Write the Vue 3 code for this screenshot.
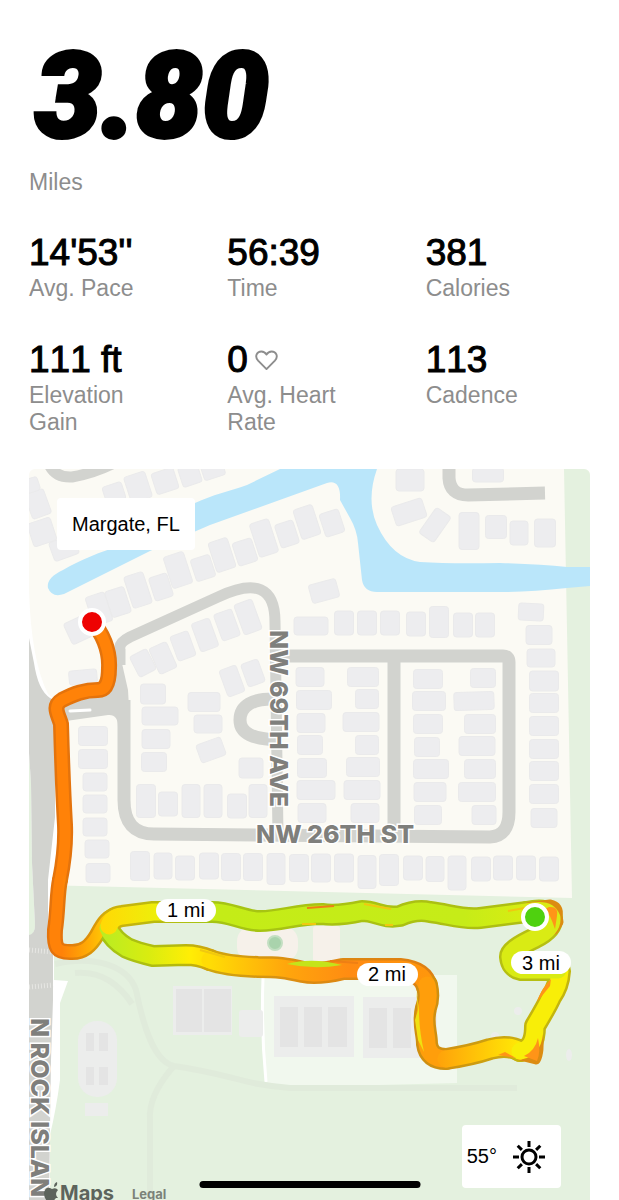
<script setup>
const stats = [
  { value: "14'53''", label: 'Avg. Pace' },
  { value: '56:39', label: 'Time' },
  { value: '381', label: 'Calories' },
  { value: '111 ft', label: 'Elevation Gain' },
  { value: '0', label: 'Avg. Heart Rate', heart: true },
  { value: '113', label: 'Cadence' },
]

// Building footprints: centre x, centre y, width, height, rotation in degrees
const buildings = [
  [165, 481, 23, 22, -18], [190, 475, 20, 20, -18], [213, 470, 22, 16, -18], [138, 487, 22, 27, -18],
  [114, 493, 20, 18, -18], [38, 504, 20, 26, -20], [32, 485, 14, 14, -18], [42, 532, 24, 24, -18],
  [64, 548, 26, 20, -20], [178, 570, 21, 33, -18], [203, 568, 20, 23, -18], [222, 555, 20, 31, -18],
  [245, 552, 20, 24, -18], [264, 538, 20, 35, -18], [287, 534, 19, 24, -18], [307, 522, 20, 31, -18],
  [332, 523, 20, 24, -18], [161, 587, 19, 24, -18], [138, 590, 20, 33, -18], [118, 602, 20, 27, -18],
  [99, 609, 20, 30, -18], [78, 630, 22, 23, -25], [205, 635, 19, 30, -20], [183, 646, 19, 26, -20],
  [163, 658, 19, 28, -24], [143, 663, 19, 23, -27], [227, 625, 19, 28, -20], [248, 617, 19, 32, -20],
  [324, 591, 28, 19, -15], [311, 626, 34, 18, 0], [344, 623, 19, 24, 0], [367, 623, 19, 24, 0],
  [390, 623, 19, 24, 0], [416, 624, 19, 24, 0], [439, 622, 19, 31, 0], [463, 625, 19, 24, 0],
  [485, 625, 19, 24, 0], [531, 612, 25, 17, 3], [539, 635, 26, 19, 0], [410, 480, 28, 22, 0],
  [488, 475, 31, 14, 0], [409, 512, 32, 20, -18], [435, 525, 18, 31, 35], [469, 531, 20, 37, 0],
  [496, 527, 21, 23, 0], [519, 533, 18, 24, 0], [545, 533, 21, 28, 0], [83, 677, 28, 14, -5],
  [93, 736, 29, 19, 0], [93, 759, 29, 19, 0], [95, 782, 24, 18, 0], [95, 804, 24, 18, 0],
  [95, 827, 24, 18, 0], [97, 849, 24, 18, 0], [98, 873, 24, 19, 0], [153, 694, 25, 20, 0],
  [160, 716, 36, 18, 0], [156, 739, 28, 19, 0], [154, 762, 25, 19, 0], [204, 702, 32, 19, 0],
  [208, 724, 28, 18, 0], [211, 750, 26, 19, -20], [146, 801, 19, 33, 0], [168, 804, 19, 24, 0],
  [191, 801, 18, 33, 0], [213, 801, 18, 33, 0], [237, 806, 19, 24, 0], [258, 801, 18, 33, 0],
  [251, 768, 24, 20, 0], [232, 681, 18, 28, -20], [253, 673, 18, 24, -20],
  [310, 677, 28, 19, 0], [314, 700, 35, 19, 0], [311, 723, 28, 19, 0], [310, 745, 25, 19, 0],
  [312, 768, 29, 19, 0], [316, 790, 38, 19, 0], [312, 813, 28, 19, 0],
  [363, 677, 31, 19, 0], [367, 699, 23, 19, 0], [361, 722, 36, 19, 0], [367, 745, 23, 19, 0],
  [363, 767, 33, 19, 0], [362, 790, 36, 19, 0], [365, 813, 28, 19, 0],
  [428, 679, 29, 19, 0], [429, 701, 33, 19, 0], [428, 724, 29, 19, 0], [427, 747, 25, 19, 0],
  [431, 769, 35, 19, 0], [430, 792, 32, 19, 0], [428, 815, 27, 19, 0],
  [483, 678, 25, 19, 0], [474, 701, 40, 18, -2], [480, 724, 31, 19, 0], [477, 746, 36, 19, 0],
  [480, 769, 31, 19, 0], [477, 792, 37, 19, 0], [484, 815, 24, 19, 0],
  [541, 658, 28, 18, 0], [544, 681, 29, 20, 0], [544, 703, 29, 19, 0], [544, 726, 29, 19, 0],
  [544, 749, 29, 19, 0], [544, 771, 29, 19, 0], [544, 794, 29, 19, 0], [544, 818, 26, 19, 0],
  [140, 866, 19, 29, 0], [163, 866, 18, 26, 0], [185, 868, 19, 24, 0], [209, 866, 19, 26, 0],
  [231, 867, 19, 27, 0], [253, 867, 19, 27, 0], [276, 869, 18, 31, 0], [299, 868, 19, 27, 0],
  [321, 868, 19, 28, 0], [344, 868, 19, 28, 0], [367, 872, 18, 33, 0], [389, 870, 19, 31, 0],
  [413, 868, 19, 24, 0], [435, 869, 18, 25, 0], [457, 873, 18, 34, 0], [481, 869, 19, 24, 0],
  [503, 868, 19, 24, 0], [526, 868, 19, 24, 0], [549, 869, 19, 24, 0],
]

const courts = [
  [176, 989, 26, 43], [204, 989, 27, 43],
  [280, 1007, 18, 40], [304, 1007, 18, 40], [328, 1007, 19, 40],
  [369, 1008, 18, 40], [393, 1008, 18, 40],
  [86, 1033, 8, 18], [99, 1033, 9, 18], [86, 1067, 8, 18], [99, 1067, 9, 18],
]

// Route sections in drawing order, each coloured by pace
const route = [
  { id: 'west', wide: false, d: 'M92 622C102 632 110 650 109 668Q109 690 98 690C84 690 74 694 62 700C52 706 58 714 61 724C62 760 63 790 65 825Q66 850 60 880' },
  { id: 'turn', wide: false, d: 'M60 880C57 894 58 910 55 930C54 948 57 952 70 952C84 953 91 945 97 935C103 924 107 916 120 914' },
  { id: 'back', wide: true, d: 'M210 960Q198 955 186 955L153 956Q136 952 127 948Q113 940 108 928' },
  { id: 'north', wide: true, d: 'M109 926Q112 917 122 916L153 912L210 912C230 911 242 921 260 921C282 921 296 914 322 914C336 916 348 914 362 911C376 911 383 919 400 916Q416 909 430 912C448 914 462 920 480 918L527 912' },
  { id: 'south', wide: true, d: 'M427 987Q423 971 400 969L343 969Q318 975 303 972C286 968 278 967 258 967Q226 966 210 960' },
  { id: 'dip', wide: true, d: 'M427 985Q430 998 426 1008C422 1024 427 1032 427 1044Q429 1059 446 1059' },
  { id: 'bottom', wide: true, d: 'M446 1059Q472 1055 490 1049Q508 1044 520 1051' },
  { id: 'rise', wide: true, d: 'M520 1051Q535 1050 535 1026Q547 1006 551 997Q559 986 560 971' },
  { id: 'hook', wide: true, d: 'M527 912Q548 907 552 918Q553 929 535 938Q509 950 510 957Q511 968 521 970L558 970' },
]
</script>

<template>
  <main class="screen">
    <section class="summary">
      <h1 class="distance">3.80</h1>
      <p class="label">Miles</p>
      <dl class="stats">
        <div v-for="s in stats" :key="s.label" class="stat">
          <dt class="label">{{ s.label }}</dt>
          <dd class="value">
            {{ s.value }}
            <svg v-if="s.heart" class="heart" viewBox="0 0 24 22" aria-hidden="true">
              <path d="M12 20 3.2 11.2C-.8 6.8 2 1.5 6.6 1.5 9.2 1.5 11 3 12 4.8 13 3 14.8 1.5 17.4 1.5 22 1.5 24.8 6.8 20.8 11.2Z" />
            </svg>
          </dd>
        </div>
      </dl>
    </section>

    <section class="map" aria-label="Route map">
      <svg class="canvas" viewBox="29 469 561 731">
        <defs>
          <linearGradient id="fill-turn" gradientUnits="userSpaceOnUse" x1="62" y1="890" x2="116" y2="890">
            <stop offset="0" stop-color="#ff8208" /><stop offset=".5" stop-color="#ffac05" /><stop offset="1" stop-color="#ffdf05" />
          </linearGradient>
          <linearGradient id="edge-turn" gradientUnits="userSpaceOnUse" x1="62" y1="890" x2="120" y2="890">
            <stop offset="0" stop-color="#e4730c" /><stop offset=".5" stop-color="#dc9208" /><stop offset="1" stop-color="#c8bd0c" />
          </linearGradient>
          <linearGradient id="fill-north" gradientUnits="userSpaceOnUse" x1="105" y1="0" x2="527" y2="0">
            <stop offset="0" stop-color="#ffda05" /><stop offset=".12" stop-color="#eeee0b" /><stop offset=".27" stop-color="#c4ec17" /><stop offset=".85" stop-color="#c6ec18" /><stop offset="1" stop-color="#d8ed12" />
          </linearGradient>
          <linearGradient id="edge-north" gradientUnits="userSpaceOnUse" x1="105" y1="0" x2="527" y2="0">
            <stop offset="0" stop-color="#cfae0b" /><stop offset=".1" stop-color="#bdb90e" /><stop offset=".25" stop-color="#a5c512" /><stop offset="1" stop-color="#aebe12" />
          </linearGradient>
          <linearGradient id="fill-back" gradientUnits="userSpaceOnUse" x1="108" y1="0" x2="210" y2="0">
            <stop offset="0" stop-color="#bdec20" /><stop offset=".4" stop-color="#d9ec10" /><stop offset=".8" stop-color="#ffee05" /><stop offset="1" stop-color="#ffdc05" />
          </linearGradient>
          <linearGradient id="edge-back" gradientUnits="userSpaceOnUse" x1="108" y1="0" x2="210" y2="0">
            <stop offset="0" stop-color="#a5c413" /><stop offset=".7" stop-color="#b5b90e" /><stop offset="1" stop-color="#cfa50d" />
          </linearGradient>
          <linearGradient id="fill-south" gradientUnits="userSpaceOnUse" x1="210" y1="0" x2="427" y2="0">
            <stop offset="0" stop-color="#ffdc05" /><stop offset=".35" stop-color="#ffa60c" /><stop offset=".65" stop-color="#ff8b12" /><stop offset="1" stop-color="#ff960c" />
          </linearGradient>
          <linearGradient id="edge-south" gradientUnits="userSpaceOnUse" x1="210" y1="0" x2="427" y2="0">
            <stop offset="0" stop-color="#cfa50d" /><stop offset=".4" stop-color="#dc8c12" /><stop offset="1" stop-color="#df7f12" />
          </linearGradient>
          <linearGradient id="fill-bottom" gradientUnits="userSpaceOnUse" x1="440" y1="0" x2="520" y2="0">
            <stop offset="0" stop-color="#ffa40a" /><stop offset="1" stop-color="#ffe905" />
          </linearGradient>
          <linearGradient id="edge-bottom" gradientUnits="userSpaceOnUse" x1="440" y1="0" x2="520" y2="0">
            <stop offset="0" stop-color="#d08f10" /><stop offset="1" stop-color="#c9ac10" />
          </linearGradient>
        </defs>

        <rect class="land" x="29" y="469" width="561" height="731" />
        <path class="park" d="M564 469H590V1200H29V750L40 885L572 898Z" />
        <path class="water" d="M48 588Q46 578 63 570C82 559 100 552 120 546L195 503C212 495 230 491 247 485L280 469H377Q366 500 377 525Q392 558 420 562Q450 564 500 563Q540 564 567 567H590V586L567 588Q530 592 500 592H377Q364 592 362 580L358 543Q357 530 350 518L340 500Q341 479 327 483L210 525L150 551L64 594Q52 598 48 588Z" />

        <!-- park grounds -->
        <path class="lawn" d="M263 975L372 975H457V1083L300 1087L266 1083Q262 1040 263 975Z" />
        <path class="lawn-edge" d="M263 978Q261 1030 266 1082" />
        <path class="trail" d="M55 964C95 955 128 966 136 990C144 1030 155 1062 174 1066C230 1074 245 1085 290 1088L517 1088" />
        <path class="trail" d="M173 1067Q148 1096 150 1120V1200" />
        <path class="trail" d="M75 973Q110 970 132 1004" />
        <rect class="sand" x="237" y="926" width="61" height="36" rx="15" />
        <rect class="sand" x="313" y="926" width="27" height="36" rx="3" />
        <circle class="tree" cx="275" cy="943" r="7" />
        <rect class="plot" x="173" y="986" width="59" height="49" />
        <rect class="plot" x="239" y="1010" width="24" height="27" rx="3" />
        <rect class="plot" x="274" y="996" width="80" height="61" />
        <rect class="plot" x="363" y="997" width="74" height="61" />
        <rect class="plot" x="78" y="1021" width="39" height="76" rx="19" />
        <rect class="plot" x="85" y="1103" width="23" height="13" />
        <circle class="plot" cx="495" cy="1036" r="4" />
        <circle class="plot" cx="518" cy="1011" r="4" />
        <ellipse class="plot" cx="569" cy="1055" rx="3" ry="6" />
        <rect v-for="(c, i) in courts" :key="i" class="court" :x="c[0]" :y="c[1]" :width="c[2]" :height="c[3]" />

        <g class="buildings">
          <rect
            v-for="(b, i) in buildings"
            :key="i"
            :x="b[0] - b[2] / 2"
            :y="b[1] - b[3] / 2"
            :width="b[2]"
            :height="b[3]"
            rx="3"
            :transform="`rotate(${b[4]} ${b[0]} ${b[1]})`"
          />
        </g>

        <!-- roads -->
        <path class="verge" d="M29 590Q31 660 48 694L60 704V722L64 728L56 890V940H54V980L68 981L60 1003V1080Q56 1110 50 1135V1200H29Z" />
        <path class="park" d="M29 753L31 783L32 863L35 925Q35 935 29 935Z" />
        <path class="road-fill" d="M29 638L34 663Q38 690 50 698L60 703L104 690L119 650L128 690L130 725L118 727Q118 714 108 715L66 721L55 730L55 817L48 880V923L53 947V1000L51 1060L49 1200H29V935Q35 934 35 925L32 863L31 783L29 753Z" />
        <path class="street wide" d="M124 700V800Q124 834 154 834L490 837Q509 836 509 812V662Q509 656 503 656H276" />
        <path class="street" d="M120 665V650Q118 643 130 637L218 597Q275 570 275 622L278 836" />
        <path class="street wide" d="M394 656V836" />
        <path class="street wide" d="M277 699C252 698 240 706 240 720S254 739 277 740" />
        <path class="street" d="M48 462Q54 478 72 477Q95 473 116 462" />
        <path class="street wide" d="M449 462V478Q450 495 468 495L545 493" />
        <path class="lane" d="M70 711L90 710" />
        <path class="crossing" d="M29 950L53 952M29 987L53 985" />

        <text class="road-name" x="256" y="843">NW 26TH ST</text>
        <text class="road-name" transform="translate(270 630) rotate(90)">NW 69TH AVE</text>
        <text class="road-name" transform="translate(31 1018) rotate(90)">N ROCK ISLAN</text>

        <!-- run route -->
        <g class="route">
          <path v-for="r in route" :key="r.id" class="edge" :class="[r.id, { wide: r.wide }]" :d="r.d" />
          <path class="edge-corner" d="M520 1056L536 1060Q541 1052 538 1030" />
          <path class="edge-corner" d="M528 907L550 904Q560 906 558 916L559 922L554 930" />
          <path v-for="r in route" :key="r.id" class="core" :class="[r.id, { wide: r.wide }]" :d="r.d" />
          <path class="spark orange" d="M524 1056L537 1061Q541 1052 538 1038Q535 1051 524 1056Z" />
          <path class="spark orange" d="M549 907Q559 906 557 916L555 929Q550 914 545 909Z" />
          <path class="spark orange" d="M537 1002Q541 989 551 979L550 986Z" />
          <path class="spark orange" d="M498 1055L505 1052L516 1058Z" />
          <path class="spark green" d="M287 964Q312 957 342 965Q314 970 287 964Z" />
          <path class="spark yellow" d="M416 990L418 1010L415 1020L418 1040L424 1052Q419 1030 419 1010Z" />
          <path class="streak" d="M307 908L334 906M330 961L358 963" />
          <path class="streak light" d="M364 904L391 909M508 911L530 907M385 925H393M302 924H316M200 950L225 957" />
        </g>
        <circle class="pin start" cx="92" cy="622" r="12" />
        <circle class="pin finish" cx="535" cy="917" r="12" />

        <g class="mile">
          <rect x="156" y="899" width="60" height="23" rx="12" />
          <text x="186" y="917">1 mi</text>
          <rect x="357" y="963" width="61" height="23" rx="12" />
          <text x="387" y="981">2 mi</text>
          <rect x="511" y="951" width="60" height="23" rx="12" />
          <text x="541" y="970">3 mi</text>
        </g>

        <!-- attribution -->
        <g class="credit">
          <path d="M54 1187Q54 1183 57 1182Q58 1186 54 1187ZM56 1198Q53 1202 51 1201H47Q44 1198 44 1193Q45 1187 50 1188L52 1189Q56 1187 58 1190Q54 1194 58 1198Z" />
          <text x="60" y="1200">Maps</text>
          <a href="#legal"><text class="legal" x="132" y="1199">Legal</text></a>
        </g>
      </svg>

      <p class="chip place">Margate, FL</p>
      <p class="chip weather">
        <span>55°</span>
        <svg class="sun" viewBox="0 0 34 34" role="img" aria-label="Sunny">
          <circle cx="17" cy="17" r="7" />
          <path d="M17 1v6M17 27v6M1 17h6M27 17h6M5.7 5.7 9.9 9.9M24.1 24.1l4.2 4.2M5.7 28.3l4.2-4.2M24.1 9.9l4.2-4.2" />
        </svg>
      </p>
    </section>
    <div class="home-indicator"></div>
  </main>
</template>

<style>
body {
  background: #fff;
}
</style>

<style scoped>
.screen {
  position: relative;
  font-family: "Liberation Sans", Arial, sans-serif;
  color: #000;
}
.summary {
  padding: 25px 29px 33px;
}
.distance {
  margin: 0;
  padding-left: 6px;
  font: italic 900 118px/144px Roboto, sans-serif;
  -webkit-text-stroke: 4px #000;
}
.label {
  margin: 0;
  font-size: 23px;
  line-height: 27px;
  color: #8d8d8d;
}
.stats {
  display: grid;
  grid-template-columns: repeat(3, 1fr);
  column-gap: 34px;
  row-gap: 36px;
  margin: 35px 0 0;
}
.stat {
  display: flex;
  flex-direction: column-reverse;
  justify-content: flex-end;
  padding-right: 30px;
}
.value {
  display: flex;
  align-items: center;
  gap: 7px;
  margin: 0;
  font-size: 37px;
  line-height: 44px;
  font-kerning: none;
  -webkit-text-stroke: 1px #000;
}
.heart {
  width: 23px;
  height: 21px;
  fill: none;
  stroke: #8d8d8d;
  stroke-width: 2;
  stroke-linejoin: round;
}
.map {
  position: relative;
  margin: 0 29px;
  overflow: hidden;
  border-radius: 6px 6px 0 0;
}
.canvas {
  display: block;
  width: 100%;
}
.land { fill: #fbfaf4; }
.park { fill: #e4f1df; }
.water { fill: #bae6fa; }
.lawn { fill: #f1f8ee; }
.lawn-edge { fill: none; stroke: #fff; stroke-width: 3; }
.trail { fill: none; stroke: #e0ebdb; stroke-width: 6; }
.sand { fill: #f6f1ea; }
.tree { fill: #a9d3ac; stroke: #c3dfc2; stroke-width: 2; }
.plot { fill: #ecedec; }
.court { fill: #e4e4e4; }
.buildings rect { fill: #ededef; stroke: #eaeaeb; stroke-width: 1; }
.verge { fill: #fff; }
.road-fill { fill: #d2d3cf; }
.street { fill: none; stroke: #d2d3cf; stroke-width: 11; }
.street.wide { stroke-width: 13; }
.lane { fill: none; stroke: #fff; stroke-width: 3; stroke-linecap: round; }
.crossing { fill: none; stroke: #e6e6e3; stroke-width: 5; stroke-dasharray: 1 2; }
.road-name {
  font: 800 25px Inter, sans-serif;
  fill: #7f7f7c;
  stroke: #fff;
  stroke-width: 3;
  paint-order: stroke;
}
.edge, .core, .edge-corner {
  fill: none;
  stroke-linecap: round;
  stroke-linejoin: round;
}
.edge { stroke-width: 16; }
.core { stroke-width: 11; }
.edge.wide { stroke-width: 22; }
.core.wide { stroke-width: 17; }
.edge-corner { stroke: #dc8c12; stroke-width: 9; }
.edge.west { stroke: #e4730c; }
.core.west { stroke: #ff8208; }
.edge.turn { stroke: url(#edge-turn); }
.core.turn { stroke: url(#fill-turn); }
.edge.north { stroke: url(#edge-north); }
.core.north { stroke: url(#fill-north); }
.edge.back { stroke: url(#edge-back); }
.core.back { stroke: url(#fill-back); }
.edge.south { stroke: url(#edge-south); }
.core.south { stroke: url(#fill-south); }
.edge.dip { stroke: #cf8f10; }
.core.dip { stroke: #ff9e0b; }
.edge.bottom { stroke: url(#edge-bottom); }
.core.bottom { stroke: url(#fill-bottom); }
.edge.rise { stroke: #c3b50e; }
.core.rise { stroke: #f8ee08; }
.edge.hook { stroke: #b5bf12; }
.core.hook { stroke: #d9eb14; }
.spark.orange { fill: #ff9418; }
.spark.green { fill: #c4e41a; }
.spark.yellow { fill: #f0e010; }
.streak { fill: none; stroke: #ee7f14; stroke-width: 2; }
.streak.light { stroke: #f0c810; }
.pin { stroke: #fff; stroke-width: 4; }
.start { fill: #ee0202; }
.finish { fill: #4fd10f; }
.mile rect { fill: #fff; }
.mile text { font-size: 20px; text-anchor: middle; }
.credit { fill: #5d645c; font: 700 20px Inter, sans-serif; }
.credit .legal { font-size: 13px; fill: #7b8279; }
.chip {
  position: absolute;
  margin: 0;
  border-radius: 4px;
  background: #fff;
  font-size: 20px;
}
.place {
  top: 29px;
  left: 28px;
  padding: 0 15px;
  line-height: 52px;
}
.weather {
  right: 29px;
  bottom: 12px;
  display: flex;
  align-items: center;
  gap: 15px;
  padding: 0 15px 0 5px;
  line-height: 63px;
}
.sun {
  width: 34px;
  height: 34px;
  fill: none;
  stroke: #000;
  stroke-width: 3;
}
.home-indicator {
  position: absolute;
  left: 50%;
  bottom: 12px;
  width: 221px;
  height: 7px;
  border-radius: 4px;
  background: #000;
  transform: translateX(-50%);
}
</style>
